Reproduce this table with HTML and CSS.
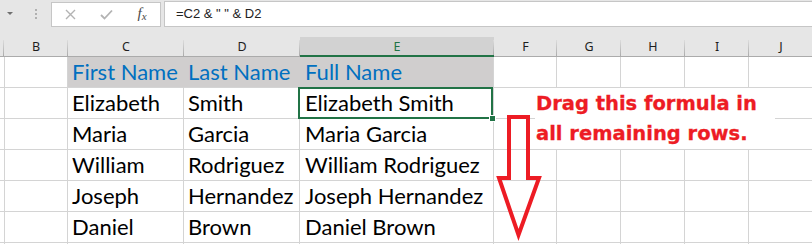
FILE: index.html
```html
<!DOCTYPE html>
<html lang="en">
<head>
<meta charset="utf-8">
<title>Full Name formula</title>
<link rel="stylesheet" href="styles.css">
</head>
<body>
<div class="window">
  <div class="formula-bar">
    <div class="namebox">
      <span class="caret"></span>
      <span class="grip"><i></i><i></i><i></i></span>
    </div>
    <div class="fx-buttons">
      <span class="slot">
        <svg width="11" height="11" viewBox="0 0 11 11"><path d="M1 1 L10 10 M10 1 L1 10" stroke="#b3b3b3" stroke-width="1.4" fill="none"/></svg>
      </span>
      <span class="slot">
        <svg width="13" height="11" viewBox="0 0 13 11"><path d="M1 6 L4.5 9.5 L12 1.5" stroke="#b3b3b3" stroke-width="1.8" fill="none"/></svg>
      </span>
      <span class="slot fx">f<small>x</small></span>
    </div>
    <div class="formula">=C2 &amp; " " &amp; D2</div>
  </div>

  <div class="sheet">
    <div class="ch"></div><div class="ch">B</div><div class="ch">C</div><div class="ch">D</div><div class="ch sel">E</div><div class="ch">F</div><div class="ch">G</div><div class="ch">H</div><div class="ch">I</div><div class="ch">J</div>

    <div class="c"></div><div class="c"></div><div class="c hd">First Name</div><div class="c hd">Last Name</div><div class="c hd e">Full Name</div><div class="c"></div><div class="c"></div><div class="c"></div><div class="c"></div><div class="c"></div>

    <div class="c"></div><div class="c"></div><div class="c">Elizabeth</div><div class="c">Smith</div><div class="c e active">Elizabeth Smith</div><div class="c"></div><div class="c"></div><div class="c"></div><div class="c"></div><div class="c"></div>

    <div class="c"></div><div class="c"></div><div class="c">Maria</div><div class="c">Garcia</div><div class="c e">Maria Garcia</div><div class="c"></div><div class="c"></div><div class="c"></div><div class="c"></div><div class="c"></div>

    <div class="c"></div><div class="c"></div><div class="c">William</div><div class="c">Rodriguez</div><div class="c e">William Rodriguez</div><div class="c"></div><div class="c"></div><div class="c"></div><div class="c"></div><div class="c"></div>

    <div class="c"></div><div class="c"></div><div class="c">Joseph</div><div class="c">Hernandez</div><div class="c e">Joseph Hernandez</div><div class="c"></div><div class="c"></div><div class="c"></div><div class="c"></div><div class="c"></div>

    <div class="c"></div><div class="c"></div><div class="c">Daniel</div><div class="c">Brown</div><div class="c e">Daniel Brown</div><div class="c"></div><div class="c"></div><div class="c"></div><div class="c"></div><div class="c"></div>

    <div class="c"></div><div class="c"></div><div class="c"></div><div class="c"></div><div class="c"></div><div class="c"></div><div class="c"></div><div class="c"></div><div class="c"></div><div class="c"></div>
  </div>

  <div class="note">Drag this formula in<br>all remaining rows.</div>

  <svg class="arrow" width="52" height="132" viewBox="0 0 52 132">
    <polygon points="15,5 34,5 34,66 45,66 24.5,123 5,66 15,66" fill="none" stroke="#ed1c24" stroke-width="4" stroke-linejoin="miter"/>
  </svg>
</div>
</body>
</html>
```

FILE: styles.css
```css
html, body {
  margin: 0;
  padding: 0;
  background: #ffffff;
  overflow: hidden;
}

.window {
  position: relative;
  width: 812px;
  height: 244px;
  overflow: hidden;
}

/* ---------- formula bar ---------- */
.formula-bar {
  display: flex;
  align-items: flex-start;
  height: 37px;
  background: #e6e6e6;
}

.namebox {
  display: flex;
  align-items: center;
  width: 51px;
  height: 27px;
  padding-left: 7px;
  box-sizing: border-box;
}

.caret {
  width: 0;
  height: 0;
  border-left: 3px solid transparent;
  border-right: 3px solid transparent;
  border-top: 3px solid #6f6f6f;
}

.grip {
  display: flex;
  flex-direction: column;
  gap: 2px;
  margin-left: 22px;
}

.grip i {
  display: block;
  width: 2px;
  height: 2px;
  background: #b0b0b0;
}

.fx-buttons {
  display: flex;
  margin-top: 2px;
  height: 25px;
  background: #ffffff;
  border: 1px solid #c6c6c6;
  box-sizing: border-box;
}

.slot {
  display: flex;
  align-items: center;
  justify-content: center;
  width: 36px;
}

.fx {
  font-family: "Liberation Serif", serif;
  font-style: italic;
  font-size: 15px;
  color: #4a4a4a;
  padding-bottom: 2px;
}

.fx small {
  font-size: 11px;
  position: relative;
  top: 2px;
}

.formula {
  flex: 1;
  margin-left: 3px;
  margin-top: 1px;
  height: 26px;
  box-sizing: border-box;
  background: #ffffff;
  border: 1px solid #c6c6c6;
  border-right: none;
  padding-left: 11px;
  font-family: "Liberation Sans", Arial, sans-serif;
  font-size: 13px;
  line-height: 24px;
  color: #222222;
  white-space: pre;
}

/* ---------- grid ---------- */
.sheet {
  display: grid;
  grid-template-columns: 4px 64px 116px 116px 194px 63px 64px 64px 64px 64px;
  grid-template-rows: 20px repeat(7, 31px);
}

.ch {
  position: relative;
  box-sizing: border-box;
  background: #e6e6e6;
  border-bottom: 1px solid #ababab;
  font-family: "Noto Sans", sans-serif;
  font-size: 12.5px;
  line-height: 19px;
  text-align: center;
  color: #1e1e1e;
}

.ch::after {
  content: "";
  position: absolute;
  right: 0;
  top: 3px;
  bottom: 0;
  width: 1px;
  background: linear-gradient(to bottom, #dcdcdc, #ababab);
}

.ch.sel {
  background: #d2d2d2;
  color: #217346;
  border-bottom: 2px solid #217346;
}

.c {
  position: relative;
  display: flex;
  align-items: flex-end;
  box-sizing: border-box;
  border-right: 1px solid #d4d4d4;
  border-bottom: 1px solid #d4d4d4;
  padding: 0 0 4px 4px;
  font-family: Lato, "Liberation Sans", sans-serif;
  font-size: 22px;
  line-height: 22px;
  color: #000000;
  white-space: nowrap;
}

.c.e {
  padding-left: 5px;
}

.c.hd {
  background: #d0cece;
  border-right-color: #d0cece;
  color: #0070c0;
}

.c.hd.e {
  border-right-color: #d4d4d4;
}

/* selected cell frame and fill handle */
.active::after {
  content: "";
  position: absolute;
  left: -2px;
  top: -1px;
  right: 0;
  bottom: -1px;
  border: 2px solid #217346;
  z-index: 2;
}

.active::before {
  content: "";
  position: absolute;
  left: 189px;
  top: 27px;
  width: 5px;
  height: 5px;
  background: #217346;
  border: 1px solid #ffffff;
  z-index: 3;
}

/* ---------- annotation ---------- */
.note {
  position: absolute;
  left: 535px;
  top: 88px;
  width: 240px;
  height: 61px;
  box-sizing: border-box;
  padding-top: 1px;
  padding-left: 1px;
  background: #ffffff;
  font-family: "DejaVu Sans", Verdana, sans-serif;
  font-weight: bold;
  font-size: 19.5px;
  line-height: 30px;
  color: #ed1c24;
  -webkit-text-stroke: 0.3px #ed1c24;
  white-space: nowrap;
  z-index: 4;
}

.arrow {
  position: absolute;
  left: 494px;
  top: 112px;
  z-index: 4;
}
```
